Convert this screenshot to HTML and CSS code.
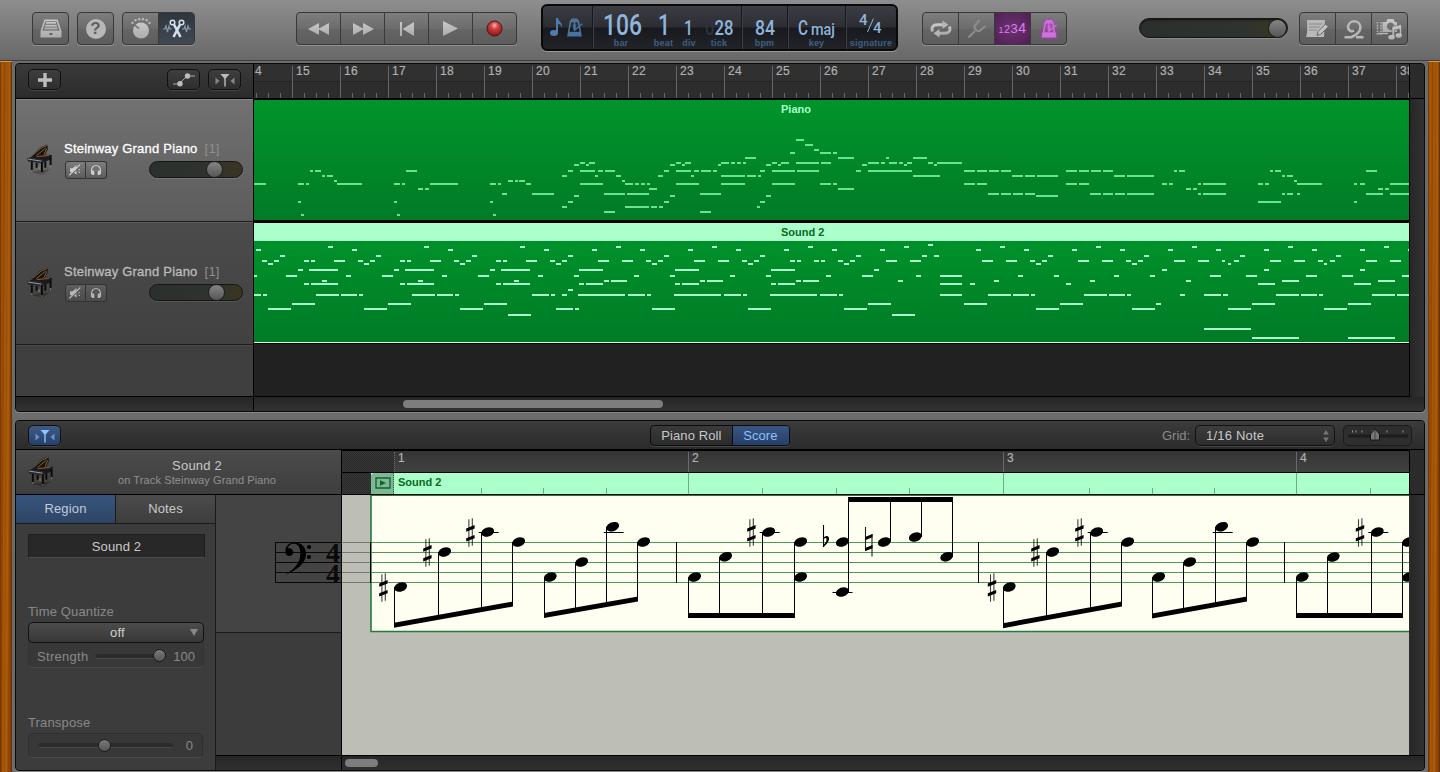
FILE: index.html
```html
<!DOCTYPE html>
<html lang="en">
<head>
<meta charset="utf-8">
<title>Steinway Grand Piano</title>
<link rel="stylesheet" href="styles.css">
</head>
<body>
<svg class="defs" width="0" height="0">
  <defs>
    <linearGradient id="ic" x1="0" y1="0" x2="0" y2="1"><stop offset="0" stop-color="#c8c8c8"/><stop offset="1" stop-color="#acacac"/></linearGradient>
    <radialGradient id="rec" cx=".5" cy=".3" r=".7"><stop offset="0" stop-color="#ffb4b4"/><stop offset=".35" stop-color="#cc4444"/><stop offset="1" stop-color="#8e0f14"/></radialGradient>
    <symbol id="catch" viewBox="0 0 20 14"><path d="M5.500 1h9l-3.800 4.500V13.500H9.300V5.500z"/><path d="M.5 4.500l4 3.500-4 3.500zM19.500 4.500l-4 3.500 4 3.500z" opacity=".6"/></symbol>
    <symbol id="piano" viewBox="0 0 28 34">
      <path d="M4 29l9-2 11-1-8 6z" fill="#000" opacity=".22"/>
      <path d="M5 12L14 3.500 21 .5l.7 4.500L18 13z" fill="#15120f"/><path d="M6 11.500L14.500 4.300 21 1.200" stroke="#8f6a3c" stroke-width=".9" fill="none"/>
      <path d="M9 12.500L19.500 4M17 12.500l3.500-8" stroke="#caa36a" stroke-width=".6"/>
      <path d="M5 12.500l11-1.500 10 .3-1 4.500-8 3L1 16.500z" fill="#17191c"/><path d="M10 13l13-1.300" stroke="#8c4a22" stroke-width="1.300"/>
      <path d="M0 15l3-1.500 14 2.500v4L1 18z" fill="#24282d"/><path d="M1 15.500l14 2.200" stroke="#b9bec4" stroke-width=".8"/>
      <path d="M5 18.500v8.500M10 19.500v5M15.500 19v11M19 18v6.500M24.500 14v8" stroke="#0b0b0c" stroke-width="2"/>
      <path d="M5 27v1.500M15.500 29v1.700M24.500 22v1.500M12.500 23v3" stroke="#b08b4f" stroke-width="1"/>
    </symbol>
    <symbol id="mute" viewBox="0 0 14 12"><path d="M2 4.200h2.500L8.500 1v9.500L4.500 8H2z"/><path d="M2 12L13 1" stroke="#5a5a5a" stroke-width="1.300"/><path d="M1.300 11.300L12.300.5" stroke="currentColor" stroke-width="1.200"/><path d="M10.300 6l1.700-.4M10.300 8l1.700.5" stroke="currentColor"/></symbol>
    <symbol id="solo" viewBox="0 0 14 12"><path d="M2.500 10V6.500a4.500 5 0 0 1 9 0V10" fill="none" stroke="currentColor" stroke-width="1.200"/><path d="M3 6.500h2.300V11H3zM8.700 6.500H11V11H8.700z"/></symbol>
    <symbol id="metro" viewBox="0 0 16 18"><path fill-rule="evenodd" d="M5.500.5h5l2 2.500 2.500 14.500H1L3.500 3zM5 4L3.200 13h9.600L11 4z"/><path d="M6.500 6h3v5h-3z" opacity=".7"/><path d="M7.500 12L15.500 5.500M8 3v9" stroke="currentColor" stroke-width="1.300"/></symbol>
    <g id="head"><ellipse rx="6.600" ry="4.500" transform="rotate(-20)"/></g>
    <g id="sharp"><path d="M-1.500-13v27.500M1.900-14v27.500" stroke="#000" stroke-width="1.100" opacity=".75"/><path d="M-4.200-3.800l8.400-3.400v3.300l-8.400 3.400zM-4.200 6l8.400-3.400v3.300l-8.400 3.400z"/></g>
  </defs>
</svg>

<header class="toolbar">
  <div class="group"><span class="btn"><svg width="22" height="19" viewBox="0 0 22 19" fill="url(#ic)"><path fill-rule="evenodd" d="M4.500.5h13L21.500 12v6.500H.5V12zM5.500 2l-3 9.500h17L16.500 2zM9.500 14v2h3v-2z"/><path d="M6 2.800h10v2H6zM5.200 5.700h11.600v2H5.200zM4.300 8.600h13.400v2H4.300z"/></svg></span></div>
  <div class="group"><span class="btn"><span class="help">?</span></span></div>
  <div class="group">
    <span class="btn"><svg width="22" height="22" viewBox="0 0 22 22" fill="url(#ic)"><circle cx="11" cy="12.500" r="8"/><path d="M4 6.500L9 10.500" stroke="#666" stroke-width="1.500"/><circle cx="2.500" cy="5" r="1.200"/><circle cx="5.500" cy="2.300" r="1.200"/><circle cx="9.200" cy="1.200" r="1.200"/><circle cx="13" cy="1.200" r="1.200"/><circle cx="16.700" cy="2.300" r="1.200"/><circle cx="19.500" cy="5" r="1.200"/></svg></span>
    <span class="btn cut"><svg width="30" height="20" viewBox="0 0 30 20" fill="none" stroke="#cfe0f0"><path d="M1 10h2l1-3 1.500 6L7 7l1 3h2M20 10h2l1-3 1.500 6L26 7l1 3h2" stroke="#8398ad" stroke-width="1.200"/><circle cx="10.500" cy="3.500" r="2.300" stroke-width="1.500"/><circle cx="19.500" cy="3.500" r="2.300" stroke-width="1.500"/><path d="M12 5.500l6.500 12.500M18 5.500L11.500 18" stroke-width="2.600"/></svg></span>
  </div>
  <div class="group transport">
    <span class="btn"><svg width="22" height="12" viewBox="0 0 22 12" fill="url(#ic)"><path d="M11 0v12L0 6zM21 0v12L10 6z"/></svg></span>
    <span class="btn"><svg width="22" height="12" viewBox="0 0 22 12" fill="url(#ic)"><path d="M1 0v12l11-6zM11 0v12l11-6z"/></svg></span>
    <span class="btn"><svg width="14" height="14" viewBox="0 0 14 14" fill="url(#ic)"><path d="M0 0h2v14H0zM14 0v14L2.500 7z"/></svg></span>
    <span class="btn"><svg width="15" height="15" viewBox="0 0 15 15" fill="url(#ic)"><path d="M0 0l15 7.500L0 15z"/></svg></span>
    <span class="btn"><svg width="17" height="17" viewBox="0 0 17 17"><circle cx="8.500" cy="8.500" r="7.500" fill="url(#rec)" stroke="#4f1515"/></svg></span>
  </div>
  <div class="lcd">
    <div class="cell c-icons"><svg width="14" height="20" viewBox="0 0 14 20" fill="#4d7dad"><ellipse cx="4" cy="16" rx="4" ry="3"/><path d="M6 1h2c.3 3.500 5 4.500 4 10-.8-3.200-2.300-4-4-4.300V16H6z"/></svg><svg class="lcd-metro" width="17" height="19"><use href="#metro"/></svg></div>
    <div class="cell c-pos">
      <div class="val w1"><svg width="40" height="34"><text x="0" y="28" font-size="29" textLength="39" lengthAdjust="spacingAndGlyphs">106</text></svg><b>bar</b></div>
      <div class="val w2"><svg width="12" height="34"><text x="0" y="28" font-size="29" textLength="12" lengthAdjust="spacingAndGlyphs">1</text></svg><b>beat</b></div>
      <div class="val w3"><svg width="10" height="34"><text x="0" y="28" font-size="19.500" textLength="9" lengthAdjust="spacingAndGlyphs">1</text></svg><b>div</b></div>
      <div class="val w4"><svg width="29" height="34"><text x="0" y="28" font-size="19.500" textLength="28.500" lengthAdjust="spacingAndGlyphs"><tspan fill="#2c333d">0</tspan>28</text></svg><b>tick</b></div>
    </div>
    <div class="cell c-bpm"><div class="val"><svg width="20" height="34"><text x="0" y="28" font-size="19.500" textLength="20" lengthAdjust="spacingAndGlyphs">84</text></svg><b>bpm</b></div></div>
    <div class="cell c-key"><div class="val"><svg width="37" height="34"><text x="0" y="28" font-size="19.500" textLength="10" lengthAdjust="spacingAndGlyphs">C</text><text x="13" y="28" font-size="16" textLength="24" lengthAdjust="spacingAndGlyphs">maj</text></svg><b>key</b></div></div>
    <div class="cell c-sig"><div class="val"><svg width="24" height="34"><text x="0" y="18" font-size="15">4</text><text x="14" y="26" font-size="15">4</text><path d="M8.500 25L14.500 11.500" stroke="#8fb5dc"/></svg><b>signature</b></div></div>
  </div>
  <div class="group modes">
    <span class="btn"><svg width="22" height="18" viewBox="0 0 22 18" fill="none" stroke="url(#ic)" stroke-width="3"><path d="M2.500 11.500C1 7 3.500 4.700 7 4.700h6M19.500 6.500c1.500 4.500-1 6.800-4.500 6.800H9"/><path d="M12.500.5l6 4.200-6 4.200zM9.500 9.100l-6 4.200 6 4.200z" fill="#b5b5b5" stroke="none"/></svg></span>
    <span class="btn off"><svg width="20" height="20" viewBox="0 0 20 20" fill="none" stroke="#8c8c8c" stroke-width="2.200"><path d="M1.500 18.500l6.500-6.500M12.500 1L8 6.500c-1.800 2.800 2.500 7 5 5.200L18.500 7"/></svg></span>
    <span class="btn count"><i>1</i><i>2</i><i>3</i><i>4</i></span>
    <span class="btn click"><svg width="16" height="19" viewBox="0 0 16 18" class="glow"><use href="#metro"/><path d="M1.500 13h13l1 5H.5z"/></svg></span>
  </div>
  <div class="slider master"><span class="knob"></span></div>
  <div class="group right">
    <span class="btn"><svg width="23" height="19" viewBox="0 0 23 19"><path d="M1 1h18l-1 17H0c2-5 1-12 1-17z" fill="#b9b9b9"/><path d="M3 5h13M3 8h11M3 11h8" stroke="#8a8a8a" stroke-width="1"/><path d="M11 16.500l1-4L19.500 5l3 2.700-7.700 7.500z" fill="#c4c4c4" stroke="#666"/></svg></span>
    <span class="btn"><svg width="20" height="20" viewBox="0 0 20 20" fill="none" stroke="#b8b8b8" stroke-width="2.600"><path d="M.5 18.200H7c5-1.700 9.500-5.500 9.500-10.400A6.300 6.300 0 0 0 4 7.800c0 3.400 3 5.400 6 3.900"/><path d="M12 18.200h7.500"/></svg></span>
    <span class="btn"><svg width="27" height="22" viewBox="0 0 27 22" fill="url(#ic)"><path d="M1.500 4v13M5 4v13" stroke="#b5b5b5" stroke-width="1.600" stroke-dasharray="1.600 1.200"/><path d="M2 15.500h10" stroke="#b5b5b5" stroke-width="1.400"/><path fill-rule="evenodd" d="M6.500 4H10l1.500-3h6L19 4h2v10H6.500zM14.500 4.500a3.700 3.700 0 1 0 .1 0z"/><path d="M16 8.500l9.500-2V18h-2v-7l-5 1v8h-2.500z" stroke="#666" stroke-width=".6"/><ellipse cx="15.500" cy="19.300" rx="3.200" ry="2.300"/><ellipse cx="22.700" cy="17.500" rx="3.200" ry="2.300"/></svg></span>
  </div>
</header>

<main class="workspace">
  <div class="wood"></div>
  <div class="panels">
    <section class="panel arrange">
      <div class="a-head">
        <span class="dark-btn"><svg width="14" height="14" viewBox="0 0 14 14"><path d="M5.300 0h3.400v5.300H14v3.400H8.700V14H5.300V8.700H0V5.300h5.300z"/></svg></span>
        <span class="dark-btn push"><svg width="22" height="14" viewBox="0 0 22 14"><path d="M0 11h6l8-8h8" fill="none" stroke="#aaa"/><circle cx="7" cy="10.700" r="2.700"/><circle cx="14.500" cy="3" r="2.700"/></svg></span>
        <span class="dark-btn"><svg width="20" height="14"><use href="#catch"/></svg></span>
      </div>
      <div class="ruler" id="ruler"></div>
      <div class="corner"></div>

      <div class="heads">
        <div class="track selected">
          <svg class="piano" width="27" height="33"><use href="#piano"/></svg>
          <div class="t-body">
            <div class="t-name">Steinway Grand Piano<em>[1]</em></div>
            <div class="t-ctl"><span class="ms"><svg width="14" height="12"><use href="#mute"/></svg></span><span class="ms"><svg width="14" height="12"><use href="#solo"/></svg></span><div class="slider vol v1"><span class="knob"></span></div></div>
          </div>
        </div>
        <div class="track">
          <svg class="piano" width="27" height="33"><use href="#piano"/></svg>
          <div class="t-body">
            <div class="t-name">Steinway Grand Piano<em>[1]</em></div>
            <div class="t-ctl"><span class="ms"><svg width="14" height="12"><use href="#mute"/></svg></span><span class="ms"><svg width="14" height="12"><use href="#solo"/></svg></span><div class="slider vol v2"><span class="knob"></span></div></div>
          </div>
        </div>
        <div class="track-empty"></div>
      </div>
      <div class="lanes">
        <div class="region r1"><div class="r-title">Piano</div><svg id="roll1" width="1155" height="102" viewBox="254 118 1155 102"></svg></div>
        <div class="region r2"><div class="r-title">Sound 2</div><svg id="roll2" width="1155" height="101" viewBox="254 241 1155 101"></svg></div>
      </div>
      <div class="vbar"></div>

      <div class="foot-l"></div>
      <div class="foot"><span class="thumb"></span></div>
    </section>

    <section class="panel editor">
      <div class="e-head">
        <span class="dark-btn active"><svg width="20" height="14"><use href="#catch"/></svg></span>
        <div class="tabs"><span>Piano Roll</span><span class="on">Score</span></div>
        <span class="grid-label">Grid:</span>
        <div class="select"><span>1/16 Note</span><svg width="6" height="12"><path d="M3 0l2.800 4.500H.2zM3 12L.2 7.500h5.600z"/></svg></div>
        <div class="zoomer"><svg width="60" height="16" viewBox="0 0 60 16"><path d="M1 9h58" stroke="#1c1c1c" stroke-width="3" stroke-linecap="round"/><path d="M4.500 3.500v2M8 3.500v2M14 3.500v2M24.500 3.500v2M39 3.500v2M55 3.500v2" stroke="#999"/><path d="M27 2l4.500 5v6h-9V7z" fill="#777" stroke="#151515"/><path d="M27 3v10" stroke="#444"/></svg></div>
      </div>
      <div class="info">
        <svg class="piano" width="27" height="33"><use href="#piano"/></svg>
        <div class="info-text"><div class="i1">Sound 2</div><div class="i2">on Track Steinway Grand Piano</div></div>
      </div>
      <div class="inspector">
        <div class="i-tabs"><span class="on">Region</span><span>Notes</span></div>
        <div class="i-body">
          <div class="field">Sound 2</div>
          <div class="label tq">Time Quantize</div>
          <div class="quant"><div class="q-sel"><span>off</span><svg width="8" height="7"><path d="M0 0h8L4 7z"/></svg></div>
            <div class="q-row"><span>Strength</span><div class="mini s1"><i></i></div><span>100</span></div></div>
          <div class="label tp">Transpose</div>
          <div class="trans"><div class="mini s2"><i></i></div><span>0</span></div>
        </div>
      </div>
      <div class="clef-col">
        <div class="clef-top">
          <svg width="125" height="137" viewBox="216 495 125 137">
            <path d="M275.500 542v41M275 542.500h66M275 552.500h66M275 562.500h66M275 572.500h66M275 582.500h66" stroke="#080808"/>
            <path d="M285.500 549.500c.8-4.500 4.800-7 9.500-6.900 6.800.2 11.300 5 11 11.900-.4 9.500-10 16-21.300 20.500 9-5.500 15-11 15.500-20 .4-6.800-1.500-11-6-11.200-3.200-.1-5.800 1.800-6.500 4.500 3-.7 5.500.8 5.500 3.700 0 2.500-1.700 4-3.900 4-2.700 0-4.400-2.500-3.800-6.500z"/><circle cx="309" cy="547" r="2.100"/><circle cx="309" cy="557" r="2.100"/>
            <text x="326" y="562" textLength="14" lengthAdjust="spacingAndGlyphs">4</text><text x="326" y="582.500" textLength="14" lengthAdjust="spacingAndGlyphs">4</text>
          </svg>
        </div>
        <div class="clef-rest"></div>
      </div>
      <div class="clef-foot"></div>
      <div class="s-ruler" id="sruler"></div>
      <div class="strip"><span class="s-hatch"></span><span class="s-play"><svg width="16" height="12"><path d="M1 1h14v10H1z" fill="none" stroke="#12612b" stroke-width="1.300"/><path d="M5 3.300L11 6 5 8.700z"/></svg></span><span class="s-title">Sound 2</span><svg id="sticks" width="1015" height="21" viewBox="394 473 1015 21"></svg></div>
      <svg id="score" width="1067" height="260" viewBox="342 495 1067 260"></svg>
      <div class="s-foot"><span class="thumb"></span></div>
      <div class="e-vtop"></div>
      <div class="e-vbar"></div>
    </section>
  </div>
  <div class="wood"></div>
</main>
<script src="app.js"></script>
</body>
</html>
```

FILE: app.js
```js
// Note rows: "pitchY: start-end,..." in thirds of a pixel, in three column blocks.
const ORIGINS = [250, 640, 1025];
const ROLL1 = [
`192:12-48,144-162,168-177,261-336,432-450,456-465,540-624,720-738,744-753,828-843,990-1059,1125-1149,1155-1167
153:180-189,195-213,468-501,954-969,990-1035,1044-1059,1065-1095
168:216-225,231-249,936-951,1035-1044,1098-1113
183:252-261,774-789,795-804,807-825,1116-1125
246:144-153,432-441,720-729,954-969
285:153-162,441-450,729-738
207:504-519,525-537
222:756-771,846-912,1062-1125,1131-1170
135:972-987,1008-1017
129:990-1005,1017-1035
228:972-987
261:936-951,1125-1170
276:1062-1095`,
`192:3-15,21-30,108-177,243-315,396-465,540-573,579-591,972-1005,1011-1041
207:27-51,594-642
222:0-27,180-243,1044-1077,1083-1113,1119-1149,1155-1170
261:0-27,33-51,57-69,351-360
168:54-69,153-162,243-315,321-348,354-363,819-900,1116-1149,1155-1170
153:72-87,108-153,162-177,183-213,219-231,360-375,396-465,471-537,648-663,684-816,972-1005,1011-1041,1047-1077,1083-1113
135:90-105,126-135,234-243,378-393,414-423,666-681,792-801,882-891
129:108-123,135-153,243-267,273-285,291-303,309-318,396-411,423-447,468-537,543-573,684-717,723-735,747-771,777-789,801-816,864-879,891-966
114:315-348,594-642,738-747,819-861
99:450-465,540-573,579-591
90:522-537
75:495-519
60:468-492
228:90-105,378-393
246:72-87,360-375
276:180-213`,
`153:123-156,162-192,198-228,234-264,447-456,462-480,735-744,750-768,1023-1056
168:0-30,36-99,267-300,306-387,771-780,786-804
183:807-816
192:123-156,162-192,411-426,432-444,519-528,534-603,699-714,720-732,816-891,987-996,1005-1020,1095-1152
207:483-498,504-516,1059-1074,1080-1092
222:0-30,195-228,234-264,270-300,306-387,519-528,534-603,771-780,786-804,816-825,1023-1074,1095-1152
228:33-99
246:699-768,987-996`];
const ROLL2 = [
`381:234-249,522-537,810-825,1098-1113
390:18-33,306-321,594-609,882-897,1026-1041
408:90-105,378-393,666-681,954-969
423:36-51,72-87,162-177,183-195,252-285,324-339,360-375,450-465,471-483,540-573,612-627,648-663,738-753,759-771,828-861,900-915,936-951,1044-1077,1116-1149
432:54-69,342-357,630-645,918-933
450:144-159,177-264,432-447,465-552,720-735,753-840,987-1059
468:12-21,108-141,288-303,396-429,576-591,684-717,864-879,972-987,1152-1167
483:216-231,504-519,792-807,1062-1077,1083-1131
492:162-177,183-264,450-465,471-552,738-753,759-840,987-1002,1008-1059
510:954-969
525:12-33,39-51,198-267,273-321,327-339,486-555,561-609,615-627,846-897,903-915,936-951,984-1125,1134-1170
552:126-195,414-483,702-771
567:54-123,342-411,630-699,918-969,975-987
585:774-843`,
`375:864-879
381:216-231,504-519,792-807,1080-1095
390:0-15,144-159,288-303,432-447,576-591,720-735,1008-1023,1152-1167
408:72-87,360-375,648-663,846-861,882-897
423:18-33,54-69,162-195,234-267,306-321,342-357,450-465,471-483,522-537,543-555,594-609,630-645,738-771,810-843,1026-1059,1098-1131
432:36-51,324-339,612-627
450:105-177,393-465,702-717
468:90-105,270-285,378-393,558-573,666-699,828-843,900-966,1134-1149
483:180-195,201-249,468-483,489-537,774-789,1062-1077
492:105-120,126-177,393-408,414-465,900-966,990-1005
525:0-15,21-33,102-243,252-303,309-321,390-531,540-591,597-609,900-966,1044-1113,1119-1167
552:684-753,972-1041
567:36-105,324-393,612-681
585:756-825`,
`381:213-228,501-516,789-804,1077-1092
390:0-12,141-156,285-300,429-444,573-588,717-732,861-876,1005-1020,1149-1152
408:69-84,357-372,645-660,933-948
423:15-30,51-66,159-192,231-264,303-318,339-354,447-480,519-552,591-600,627-642,735-768,807-840,879-894,915-930,1023-1056,1095-1128
432:33-48,321-336,609-618,897-906
450:411-426,717-732,1005-1020
468:87-102,267-282,375-390,555-588,663-696,843-876,951-984,1131-1152
483:195-210,483-498,771-822,1059-1110
492:123-138,699-750,987-1038
525:0-12,18-30,177-246,252-300,306-318,465-480,537-588,594-609,753-822,828-876,882-894,1041-1110,1116-1152
552:105-174,393-408,681-750,969-1038
567:33-102,321-390,609-678,897-966
627:537-678
654:681-822,969-1110`];

function roll(id, blocks, color) {
  let d = '';
  blocks.forEach((block, b) => block.split('\n').forEach(row => {
    const [y, list] = row.split(':');
    list.split(',').forEach(r => {
      const [s, e] = r.split('-').map(v => ORIGINS[b] + Math.round(v / 3));
      d += `M${s} ${120 + Math.round(y / 3)}H${e}`;
    });
  }));
  document.getElementById(id).innerHTML = `<path d="${d}" stroke="${color}" stroke-width="2"/>`;
}
roll('roll1', ROLL1, '#6be38d');
roll('roll2', ROLL2, '#aaffcb');

// Arrange ruler
let bars = '<span class="bar first">4</span>';
for (let n = 15; n <= 38; n++) bars += `<span class="bar">${n}</span>`;
document.getElementById('ruler').innerHTML = bars;

// Score ruler: widths between bar lines
document.getElementById('sruler').innerHTML = '<span class="s-hatch wide"></span>' +
  [[1, 294], [2, 315], [3, 293], [4, 113]].map(([n, w]) => `<span class="sbar" style="width:${w}px">${n}</span>`).join('');
document.getElementById('sticks').innerHTML =
  '<path d="' + [688, 1003, 1296].map(x => `M${x}.5 473v21`).join('') +
  [481, 543, 606, 762, 836, 909, 1089, 1152, 1214, 1370].map(x => `M${x}.5 488v6`).join('') + '" stroke="#6fab88"/>';

// Score drawing
let s = '<rect x="342" y="495" width="1067" height="260" fill="#bdbeb6"/>' +
  '<rect x="371" y="495" width="1040" height="137" fill="#fefff1"/>';
[542, 552, 562, 572, 582].forEach(y => {
  s += `<path d="M342 ${y}.5h29" stroke="#767771"/><path d="M371 ${y}.5h1040" stroke="#4d9a55"/>`;
});
s += '<path d="M371 495V631.500H1411" fill="none" stroke="#267a3d" stroke-width="1.600"/><path d="M370 495.500h1041" stroke="#267a3d" stroke-width="1"/>';
s += '<path d="M370.500 542v41M676.500 542v41M978.500 542v41M1284.500 542v41" stroke="#000"/>';
const groups = [
  // h: note heads, b: beam end points, sh: heads with a sharp, up: stems point up
  { h: [[400.7, 587], [444.7, 552], [487.7, 532], [518.7, 542]], b: [394, 625.3, 513, 604], sh: [0, 1, 2] },
  { h: [[550.3, 577], [581.7, 562], [612.7, 526.7], [643.7, 542]], b: [544, 615.5, 638, 599] },
  { h: [[694.7, 577], [725.7, 556.7], [768.7, 532], [800.7, 542]], b: [688, 615.5, 795, 615.5], sh: [2] },
  { h: [[842.3, 592], [884.3, 542], [915.3, 537], [946.7, 556.7]], b: [848, 499.5, 953, 499.5], up: true },
  { h: [[1009.3, 587], [1052.7, 552], [1096.7, 532], [1127.7, 542]], b: [1003, 625.7, 1122, 604], sh: [0, 1, 2] },
  { h: [[1158.7, 577], [1189.7, 562], [1221.7, 526.7], [1252.7, 542]], b: [1152, 616, 1247, 599] },
  { h: [[1302.3, 577], [1333.3, 557], [1377.3, 532], [1408.5, 542]], b: [1296, 615.5, 1403, 615.5], sh: [2] }
];
groups.forEach(g => {
  const [x1, y1, x2, y2] = g.b;
  g.h.forEach(([x, y], i) => {
    s += `<use href="#head" x="${x}" y="${y}"/>`;
    const sx = Math.floor(g.up ? x + 5.9 : x - 6) + .5;
    const by = y1 + (y2 - y1) * (sx - x1) / (x2 - x1);
    s += `<path d="M${sx} ${y}V${by}" stroke="#000"/>`;
    if (g.sh && g.sh.includes(i)) s += `<use href="#sharp" x="${x - 17.3}" y="${y + .3}"/>`;
    if (y < 535 && !g.up) s += `<path d="M${x - 9} 532.500h20" stroke="#000"/>`;
  });
  s += `<path d="M${x1} ${y1 - 2.5}L${x2} ${y2 - 2.5}v5L${x1} ${y1 + 2.5}z"/>`;
});
s += '<use href="#head" x="800.700" y="577"/><use href="#head" x="842.300" y="542"/><use href="#head" x="1408.500" y="577"/>' +
  '<path d="M832.500 592.500h20" stroke="#000"/>' +
  '<path d="M823.500 525v22" stroke="#000" stroke-width="1.100"/><path d="M823.500 538c3-3.500 6-2 5.500 1.500-.4 3-3 5-5.500 7.500v-2c2-2 3-3.500 3-5.500s-1.500-2-3 0z"/>' +
  '<path d="M865.500 527v22M872 534v22.500" stroke="#222" stroke-width="1.100"/><path d="M865 537l7.500-3v3.200l-7.500 3zM865 548l7.500-3v3.200l-7.500 3z"/>';
document.getElementById('score').innerHTML = s;
```

FILE: styles.css
```css
* { box-sizing: border-box; }
body { margin: 0; width: 1440px; height: 772px; overflow: hidden; background: #6c6c6c; font-family: "Liberation Sans", Arial, sans-serif; font-size: 13px; color: #c8c8c8; }
svg { display: block; flex: none; }
.defs { position: absolute; }

/* Toolbar */
.toolbar { height: 61px; display: flex; align-items: flex-start; padding: 12px 0 0 32px; background: linear-gradient(#8e8e8e, #686868); border-bottom: 1px solid #3d3d3d; }
.group { display: flex; height: 33px; margin-right: 8px; border: 1px solid #383838; border-radius: 4px; background: linear-gradient(#7d7d7d, #6c6c6c 50%, #656565 51%, #5d5d5d); box-shadow: 0 1px 0 #929292; }
.btn { width: 35px; display: flex; align-items: center; justify-content: center; }
.btn + .btn { width: 36px; border-left: 1px solid #3a3a3a; }
.help { width: 20px; height: 20px; border-radius: 50%; background: #b8b8b8; color: #606060; font: bold 17px/20px "Liberation Sans", sans-serif; text-align: center; }
.cut { background: linear-gradient(#2f353c, #414950); border-radius: 0 3px 3px 0; }
.transport { margin-left: 93px; margin-right: 24px; }
.transport .btn { width: 43px; }
.transport .btn + .btn { width: 44px; }
.lcd { margin-top: -8px; width: 357px; height: 47px; display: flex; border: 2px solid #08090b; border-radius: 6px; background: linear-gradient(#3c3d42, #2c2d32 49%, #18191e 51%, #23242a); box-shadow: 0 1px 0 #989898; }
.cell { height: 43px; display: flex; border-right: 1px solid #17181b; box-shadow: 1px 0 0 #3e3f44; }
.cell:last-child { border: 0; box-shadow: none; }
.c-icons { width: 50px; padding: 11px 0 0 7px; gap: 2px; }
.lcd-metro { margin-top: 1px; fill: #4d7dad; color: #4d7dad; opacity: .9; }
.c-pos { width: 149px; }
.c-bpm { width: 46px; }
.c-key { width: 58px; }
.c-sig { width: 50px; }
.cell .val { width: 100%; display: flex; flex-direction: column; align-items: center; }
.cell .val svg { overflow: visible; fill: #8fb5dc; font-family: Roboto, sans-serif; font-weight: 500; margin-top: 1px; }
.cell .val b { font: bold 9px/11px "Liberation Sans", sans-serif; color: #3e5f82; margin-top: -3px; letter-spacing: .2px; }
.cell .w1 { width: 56px; }
.cell .w1 svg { margin-left: 3px; }
.cell .w2 { width: 29px; }
.cell .w3 { width: 22px; }
.cell .w4 { width: 38px; }
.modes { margin-left: 24px; margin-right: 72px; }
.count { background: radial-gradient(#6c3370, #4f1f55); color: #dd7df0; align-items: baseline; padding-top: 7px; font-family: "Liberation Sans", sans-serif; }
.count i { font-style: normal; font-size: 14px; letter-spacing: .4px; }
.count i:nth-child(1) { font-size: 9px; }
.count i:nth-child(2) { font-size: 11px; }
.count i:nth-child(3) { font-size: 13px; }
.glow { fill: #d070dd; color: #d070dd; filter: drop-shadow(0 0 2px #c030d0); }
.slider { border-radius: 11px; border: 1px solid #161616; background: linear-gradient(90deg, #2b302d, #2f332f 70%, #3a351f); box-shadow: 0 1px 0 #8a8a8a, inset 0 1px 2px #111; display: flex; align-items: center; }
.slider .knob { border-radius: 50%; border: 1px solid #1d1d1d; background: linear-gradient(#858585, #565656); }
.master { margin-top: 6px; width: 149px; height: 20px; justify-content: flex-end; }
.master .knob { width: 19px; height: 19px; }
.right { margin-left: 11px; }

/* Frame */
.workspace { display: grid; grid-template-columns: 12px 1410px 12px; column-gap: 3px; height: 711px; background: #6c6c6c; }
.wood { border-top: 1px solid #d99a4a; background: linear-gradient(90deg, #6b3305, rgba(120, 60, 5, 0) 2px, rgba(120, 60, 5, 0) 10px, #5c2d08), linear-gradient(90.3deg, #b0620d, #a55607 3px, #8f4404 5px, #a75a0a 6px, #a05005 8px, #ad5f0d 10px, #8f4505 12px); }
.panels { padding-top: 2px; display: flex; flex-direction: column; gap: 8px; }
.panel { border: 1px solid #0a0a0a; border-radius: 4px; overflow: hidden; background: #2d2d2d; display: grid; box-shadow: 0 1px 0 #888; }

.arrange { height: 349px; grid-template-columns: 238px 1156px 14px; grid-template-rows: 35px 298px 14px; }
.a-head { display: flex; gap: 8px; padding: 5px 12px 0; background: linear-gradient(#3a3a3a, #2b2b2b); border-right: 1px solid #000; border-bottom: 1px solid #000; }
.dark-btn { width: 33px; height: 21px; border: 1px solid #101010; border-radius: 5px; background: linear-gradient(#3e3e3e, #2e2e2e); display: flex; align-items: center; justify-content: center; fill: #bdbdbd; box-shadow: 0 1px 0 #454545; }
.push { margin-left: auto; }
.ruler { display: flex; overflow: hidden; border-right: 1px solid #000; border-bottom: 1px solid #000; background: linear-gradient(#303030, #303030 17px, #242424 17px, #242424 18px, #2d2d2d 18px); }
.bar { flex: none; width: 48px; height: 32px; margin-top: 2px; padding-left: 3px; font-size: 12px; line-height: 10px; letter-spacing: .4px; color: #b0b0b0; -webkit-text-stroke: .2px currentColor; border-left: 1px solid #666; background: linear-gradient(#666, #666) 11px 27px / 1px 5px no-repeat, linear-gradient(#666, #666) 23px 27px / 1px 5px no-repeat, linear-gradient(#666, #666) 35px 27px / 1px 5px no-repeat; }
.bar.first { width: 38px; border-left: 0; padding-left: 1px; background-position: 2px 27px, 14px 27px, 26px 27px; }
.corner { background: #2b2b2b; border-bottom: 1px solid #000; }
.heads { border-right: 1px solid #000; }
.track { height: 123px; display: flex; padding: 41px 10px 0 11px; background: linear-gradient(#4b4b4b, #414141); border-bottom: 1px solid #1c1c1c; border-top: 1px solid #5b5b5b; color: #bcbcbc; }
.track.selected { background: linear-gradient(#717171, #5c5c5c); border-top-color: #868686; color: #fff; }
.piano { margin-top: 3px; }
.t-body { margin-left: 10px; width: 179px; }
.t-name { font-size: 13px; line-height: 15px; letter-spacing: .21px; white-space: nowrap; -webkit-text-stroke: .3px currentColor; }
.t-name em { font-style: normal; margin-left: 7px; color: #8f8f8f; -webkit-text-stroke: 0; }
.t-ctl { display: flex; margin-top: 5px; padding-left: 1px; }
.ms { width: 21px; height: 18px; border: 1px solid #333; background: linear-gradient(#7d7d7d, #5c5c5c); display: flex; align-items: center; justify-content: center; fill: #ccc; color: #ccc; border-radius: 3px 0 0 3px; }
.ms + .ms { border-left: 0; border-radius: 0 3px 3px 0; }
.track:not(.selected) .ms { background: linear-gradient(#5e5e5e, #4a4a4a); fill: #b5b5b5; color: #b5b5b5; }
.vol { width: 95px; height: 17px; margin-left: 42px; }
.track .slider { box-shadow: 0 1px 0 #777; }
.track:not(.selected) .slider { box-shadow: 0 1px 0 #555; }
.vol .knob { width: 17px; height: 17px; margin-left: 56px; }
.v2 .knob { margin-left: 58px; }
.track-empty { height: 52px; background: #3f3f3f; border-bottom: 1px solid #000; border-top: 1px solid #4b4b4b; }
.lanes { background: #212121; border-right: 1px solid #000; border-bottom: 1px solid #000; padding-top: 1px; }
.r1 { height: 120px; background: linear-gradient(#00952b, #007b26); box-shadow: 0 -1px 0 #000, 0 1px 0 #000, 0 3px 0 #000; margin-bottom: 3px; }
.r2 { height: 120px; background: linear-gradient(#00952b, #007b26); border-bottom: 1px solid #c8ffdc; box-shadow: 0 1px 0 #000; }
.r-title { height: 18px; padding-left: 527px; font: bold 11px/19px "Liberation Sans", sans-serif; color: #aaffcb; }
.r2 .r-title { background: #aaffcb; color: #086b22; }
.vbar { background: linear-gradient(90deg, #272727, #313131); }
.foot, .foot-l { background: linear-gradient(#262626, #323232); }
.foot-l { border-right: 1px solid #000; }
.thumb { display: block; height: 8px; border-radius: 4px; background: #7d7d7d; }
.foot .thumb { width: 260px; margin: 3px 0 0 149px; }
.foot { grid-column: 2 / 4; }

/* Editor */
.editor { height: 351px; grid-template-columns: 200px 126px 1068px 14px; grid-template-rows: 29px 23px 22px 260px 15px; }
.e-head { grid-column: 1 / 5; display: flex; padding: 4px 12px 0; background: linear-gradient(#3b3b3b, #2b2b2b); border-bottom: 1px solid #000; }
.active { background: linear-gradient(#3d5a85, #26406b); fill: #8fc3ff; }
.tabs { margin-left: 589px; width: 140px; height: 21px; display: flex; border: 1px solid #0c0c0c; border-radius: 4px; overflow: hidden; background: linear-gradient(#3a3a3a, #2b2b2b); line-height: 19px; box-shadow: 0 1px 0 #454545; }
.tabs span { width: 82px; text-align: center; letter-spacing: .1px; }
.tabs .on { width: 58px; border-left: 1px solid #0c0c0c; background: linear-gradient(#3a5680, #253f69); color: #8fc0ff; padding-right: 1px; }
.grid-label { margin-left: 372px; width: 33px; line-height: 21px; color: #8a8a8a; }
.select { width: 140px; height: 21px; border: 1px solid #111; border-radius: 5px; display: flex; align-items: center; justify-content: space-between; padding: 0 5px 0 10px; background: linear-gradient(#3d3d3d, #2c2c2c); fill: #777; box-shadow: 0 1px 0 #454545; letter-spacing: .2px; }
.zoomer { margin-left: 8px; width: 69px; height: 21px; border: 1px solid #1b1b1b; border-radius: 5px; padding: 1px 0 0 4px; background: #2e2e2e; }
.info { grid-column: 1 / 3; grid-row: 2 / 4; display: flex; padding: 3px 0 0 12px; background: linear-gradient(#4b4b4b, #3e3e3e); border-right: 1px solid #000; border-bottom: 1px solid #000; }
.info-text { width: 298px; margin-left: -2px; text-align: center; padding: 5px 0 0 0; }
.i1 { line-height: 15px; letter-spacing: .2px; }
.i2 { font-size: 11px; line-height: 15px; color: #909090; letter-spacing: .12px; }
.inspector { grid-column: 1; grid-row: 4 / 6; background: #3c3c3c; border-right: 1px solid #1a1a1a; }
.i-tabs { display: flex; height: 29px; border-bottom: 1px solid #1a1a1a; line-height: 28px; }
.i-tabs span { flex: 1; text-align: center; background: linear-gradient(#4b4b4b, #3d3d3d); letter-spacing: .15px; }
.i-tabs .on { background: linear-gradient(#39557d, #2d4565); border-right: 1px solid #1a1a1a; color: #c0cbdc; }
.i-body { padding: 10px 10px 0 12px; }
.field { width: 177px; height: 24px; background: #282828; border: 1px solid #1f1f1f; border-bottom-color: #4c4c4c; text-align: center; line-height: 23px; letter-spacing: .15px; }
.label { color: #888; line-height: 15px; letter-spacing: .15px; }
.tq { margin-top: 46px; }
.quant { width: 176px; height: 46px; margin-top: 3px; border: 1px solid #333; border-bottom-color: #4a4a4a; border-radius: 5px; background: #383838; color: #888; }
.q-sel { width: 176px; margin: -1px 0 0 -1px; height: 21px; border: 1px solid #111; border-radius: 5px; display: flex; align-items: center; padding: 0 5px 0 0; background: linear-gradient(#4b4b4b, #383838); color: #d0d0d0; fill: #888; }
.q-sel span { margin-left: 81px; flex: 1; letter-spacing: .2px; }
.q-row { display: flex; align-items: center; height: 26px; padding: 0 8px; justify-content: space-between; }
.q-row span:first-child { letter-spacing: .3px; }
.mini { height: 5px; border-radius: 3px; background: #2b2b2b; border-bottom: 1px solid #4a4a4a; display: flex; align-items: center; }
.mini i { width: 13px; height: 13px; border-radius: 50%; border: 1px solid #1a1a1a; background: linear-gradient(#7a7a7a, #555); }
.s1 { width: 71px; padding-left: 58px; }
.s2 { width: 135px; padding-left: 60px; }
.tp { margin-top: 47px; }
.trans { width: 175px; height: 25px; margin-top: 3px; border: 1px solid #2f2f2f; border-bottom-color: #4a4a4a; border-radius: 5px; background: #383838; display: flex; align-items: center; justify-content: space-between; padding: 0 9px; color: #888; }
.clef-col { grid-column: 2; grid-row: 4; border-right: 1px solid #000; background: #3c3c3c; }
.clef-top { height: 138px; background: #444; border-bottom: 1px solid #1a1a1a; }
.clef-top text { font: bold 28px "Liberation Serif", serif; fill: #0a0a0a; }
.clef-foot { grid-column: 2; grid-row: 5; border-top: 1px solid #000; border-right: 1px solid #000; background: linear-gradient(#262626, #303030); }
.s-ruler { grid-column: 3; grid-row: 2; display: flex; overflow: hidden; background: linear-gradient(#343434, #424242); border-bottom: 1px solid #000; border-right: 1px solid #000; border-top: 1px solid #000; }
.s-hatch { flex: none; width: 29px; background: repeating-conic-gradient(#272727 0 25%, #3a3a3a 0 50%) 0 0 / 2px 2px; }
.s-hatch.wide { width: 52px; }
.sbar { flex: none; height: 22px; margin-top: 1px; padding-left: 3px; font-size: 12px; line-height: 12px; color: #b0b0b0; border-left: 1px solid #6a6a6a; -webkit-text-stroke: .2px currentColor; }
.sbar:nth-child(2) { border-left-style: dotted; }
.strip { grid-column: 3; grid-row: 3; display: grid; grid-template-columns: 29px 23px 1015px; background: #aaffcb; border-bottom: 1px solid #000; border-right: 1px solid #000; }
.s-play { background: #7bb893; padding: 4px 0 0 4px; fill: #12612b; border-right: 1px dotted #2b5a3b; border-top-left-radius: 4px; }
.s-title { grid-column: 3; grid-row: 1; padding-left: 4px; font: bold 11px/18px "Liberation Sans", sans-serif; color: #0a6a25; }
#sticks { grid-column: 3; grid-row: 1; }
#score { grid-column: 3; grid-row: 4; }
.s-foot { grid-column: 3 / 5; grid-row: 5; border-top: 1px solid #000; background: linear-gradient(#262626, #303030); }
.s-foot .thumb { width: 33px; margin: 3px 0 0 3px; }
.e-vtop { grid-column: 4; grid-row: 2 / 4; background: #2b2b2b; border-bottom: 1px solid #000; }
.e-vbar { grid-column: 4; grid-row: 4; background: linear-gradient(90deg, #272727, #313131); }
```
